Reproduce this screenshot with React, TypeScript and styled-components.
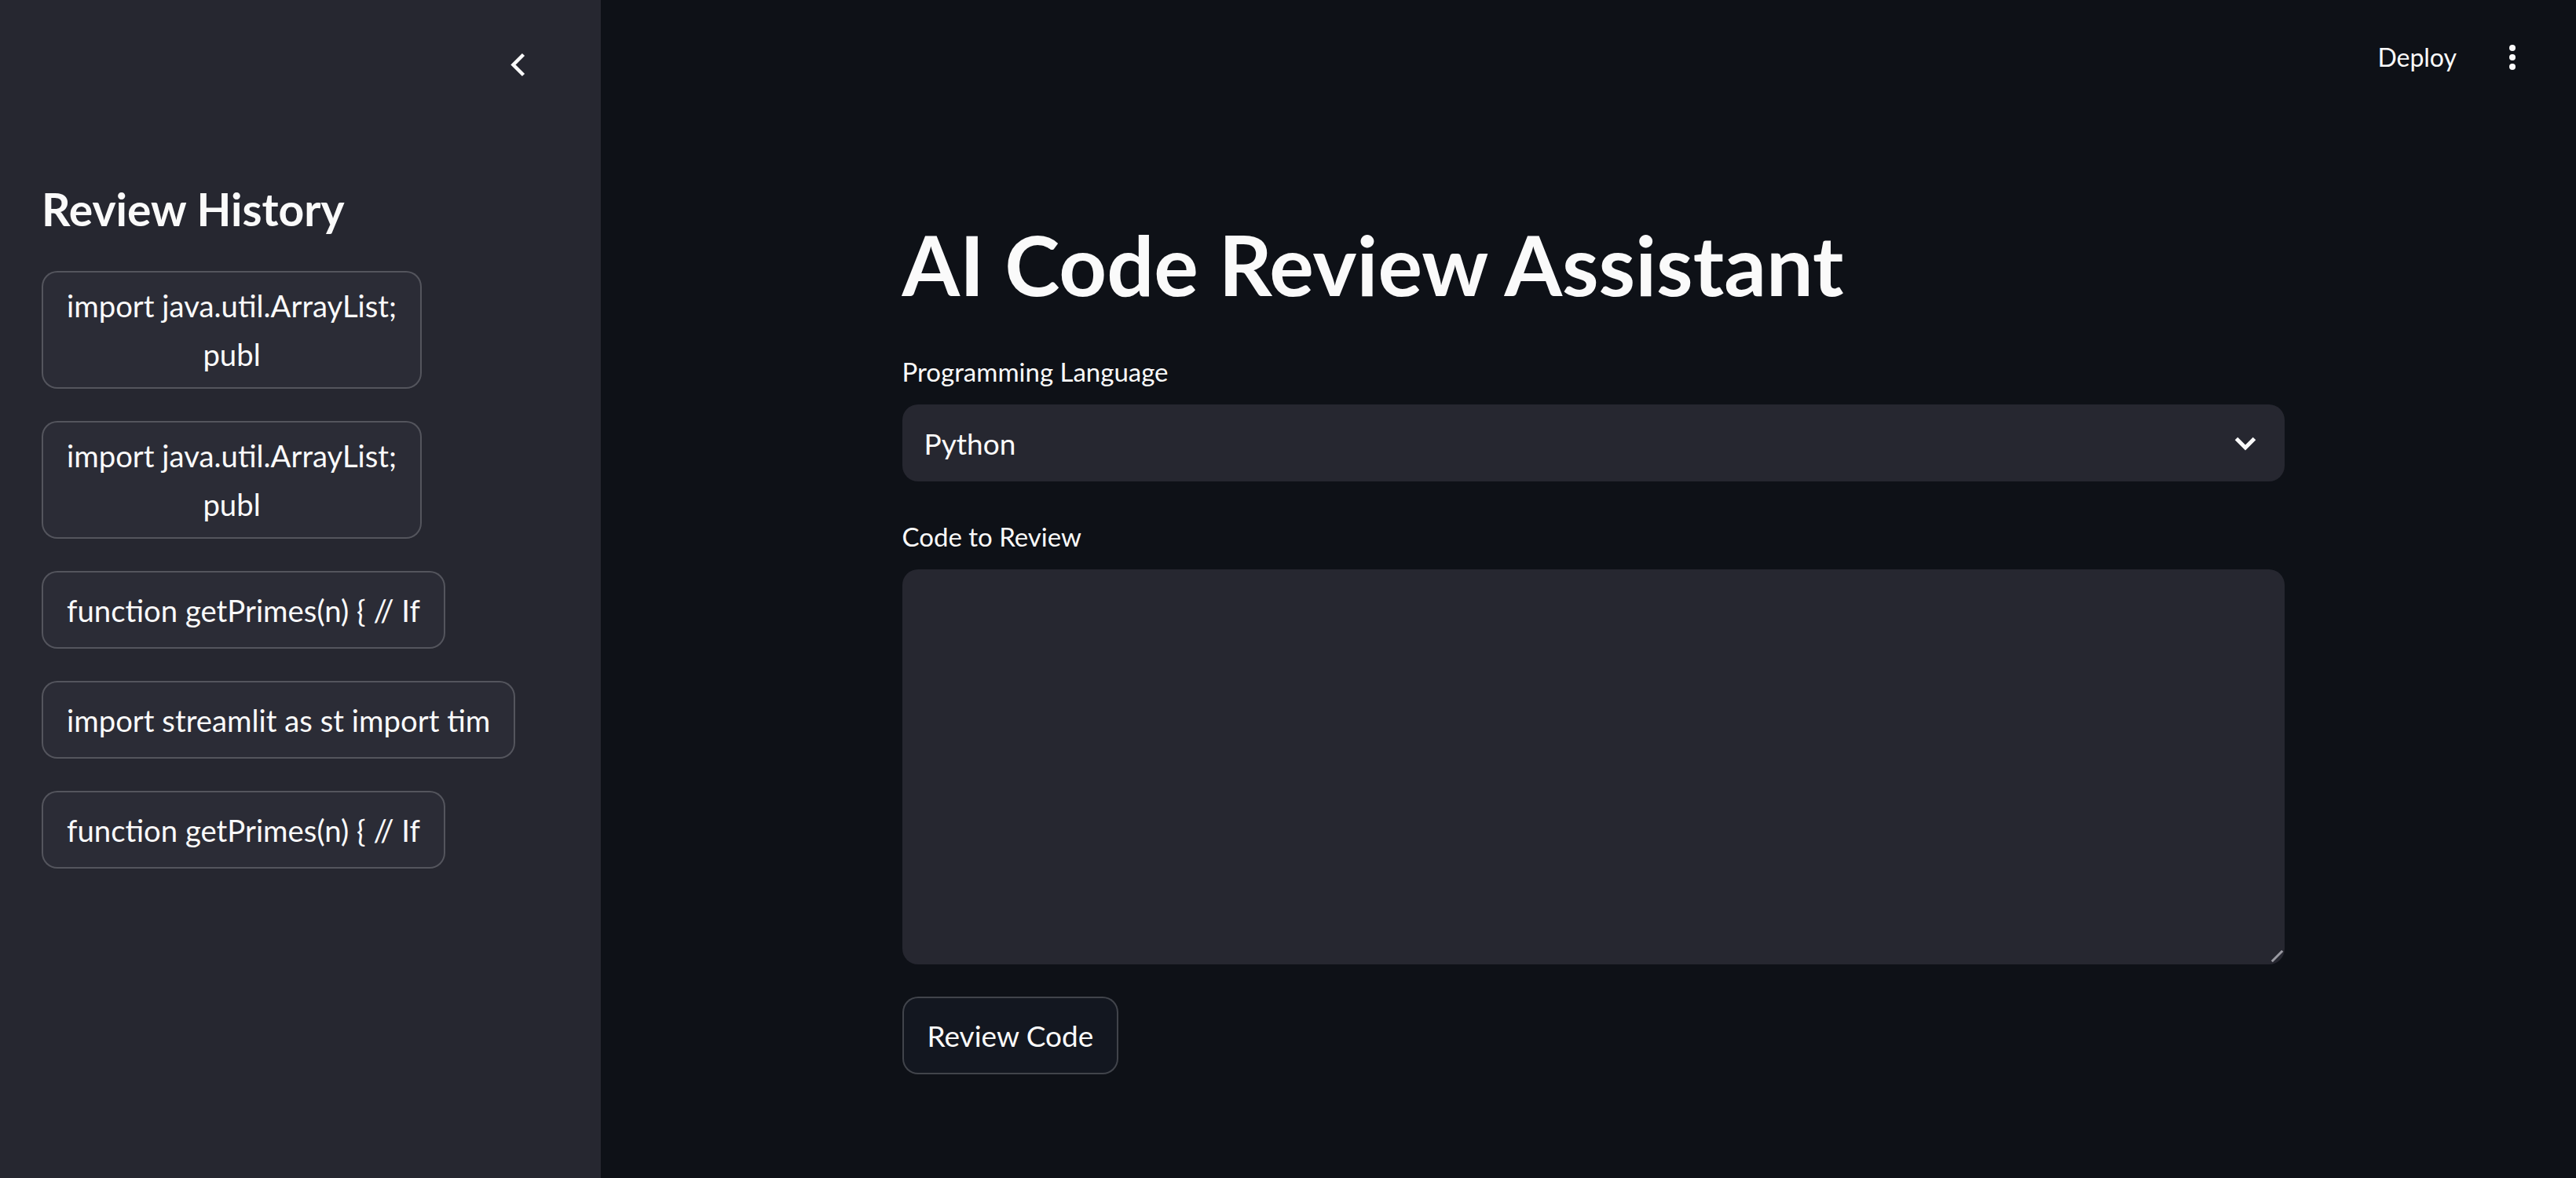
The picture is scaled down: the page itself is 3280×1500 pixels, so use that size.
import styled, { createGlobalStyle } from "styled-components";

const GlobalStyle = createGlobalStyle`
  * {
    box-sizing: border-box;
  }
  body {
    margin: 0;
    background: #0e1117;
    color: #fafafa;
    font-family: Lato, "Noto Sans", sans-serif;
  }
`;

const Page = styled.div`
  display: flex;
  min-height: 100vh;
`;

const Sidebar = styled.aside`
  width: 765px;
  flex-shrink: 0;
  background: #262730;
  padding: 0 53px;
  display: flex;
  flex-direction: column;
`;

const SidebarTop = styled.div`
  height: 233px;
  padding-top: 53px;
  padding-right: 23px;
  display: flex;
  justify-content: flex-end;
  align-items: flex-start;
`;

const IconButton = styled.button`
  background: none;
  border: none;
  padding: 0;
  color: #fafafa;
  display: flex;
  cursor: pointer;
`;

const SidebarTitle = styled.h2`
  margin: 0 0 45px;
  font-size: 57px;
  font-weight: 700;
  line-height: 1.18;
`;

const HistoryList = styled.div`
  display: flex;
  flex-direction: column;
  align-items: flex-start;
  gap: 41px;
`;

const Button = styled.button<{ $inSidebar?: boolean }>`
  min-height: 99px;
  padding: 11px 30px;
  border: 2px solid rgba(250, 250, 250, 0.2);
  border-radius: 20px;
  background: ${(p) => (p.$inSidebar ? "#2b2c36" : "#131720")};
  color: #fafafa;
  font-family: Lato, "Noto Sans", sans-serif;
  font-size: ${(p) => (p.$inSidebar ? "38.3px" : "37px")};
  line-height: 62px;
  text-align: center;
  display: flex;
  align-items: center;
  justify-content: center;
  cursor: pointer;
`;

const Main = styled.main`
  flex: 1;
  display: flex;
  flex-direction: column;
`;

const Header = styled.header`
  height: 145px;
  display: flex;
  justify-content: flex-end;
  align-items: center;
  gap: 47px;
  padding-right: 57px;
`;

const DeployLink = styled.span`
  font-size: 32px;
  color: #fafafa;
`;

const Block = styled.div`
  width: 1760px;
  margin: 0 auto;
  padding-top: 128px;
  position: relative;
  left: 6px;
`;

const Title = styled.h1`
  margin: 0 0 49px;
  font-size: 106px;
  font-weight: 700;
  line-height: 1.19;
`;

const Label = styled.div`
  font-size: 33px;
  line-height: 51px;
  margin-bottom: 16px;
`;

const Select = styled.div`
  height: 98px;
  border-radius: 20px;
  background: #262730;
  padding: 0 25px 0 28px;
  display: flex;
  align-items: center;
  justify-content: space-between;
  font-size: 37px;
  margin-bottom: 45px;
`;

const TextAreaWrap = styled.div`
  position: relative;
  height: 503px;
  margin-bottom: 41px;

  &::after {
    content: "";
    position: absolute;
    right: 0px;
    bottom: 9px;
    width: 19px;
    height: 3px;
    background: #9a9aa2;
    transform: rotate(-45deg);
  }
`;

const TextArea = styled.textarea`
  width: 100%;
  height: 100%;
  border: none;
  border-radius: 20px;
  background: #262730;
  color: #fafafa;
  font-family: Lato, "Noto Sans", sans-serif;
  font-size: 37px;
  padding: 24px 28px;
  resize: none;
  outline: none;
`;

const history = [
  ["import java.util.ArrayList;", "publ"],
  ["import java.util.ArrayList;", "publ"],
  ["function getPrimes(n) { // If"],
  ["import streamlit as st import tim"],
  ["function getPrimes(n) { // If"],
];

function App() {
  return (
    <>
      <GlobalStyle />
      <Page>
        <Sidebar>
          <SidebarTop>
            <IconButton aria-label="Collapse sidebar">
              <svg width="60" height="60" viewBox="0 0 60 60" fill="none">
                <polyline
                  points="37.5,16.5 24.5,29.5 37.5,42.5"
                  stroke="#fafafa"
                  strokeWidth="4.5"
                />
              </svg>
            </IconButton>
          </SidebarTop>
          <SidebarTitle>Review History</SidebarTitle>
          <HistoryList>
            {history.map((lines, i) => (
              <Button key={i} $inSidebar>
                <span>
                  {lines.map((l, j) => (
                    <span key={j}>
                      {j > 0 && <br />}
                      {l}
                    </span>
                  ))}
                </span>
              </Button>
            ))}
          </HistoryList>
        </Sidebar>
        <Main>
          <Header>
            <DeployLink>Deploy</DeployLink>
            <svg width="48" height="48" viewBox="0 0 48 48" fill="#fafafa">
              <circle cx="24" cy="12" r="4" />
              <circle cx="24" cy="24" r="4" />
              <circle cx="24" cy="36" r="4" />
            </svg>
          </Header>
          <Block>
            <Title>AI Code Review Assistant</Title>
            <Label>Programming Language</Label>
            <Select>
              <span>Python</span>
              <svg width="50" height="50" viewBox="0 0 50 50" fill="none">
                <polyline
                  points="13.5,19.5 25,31 36.5,19.5"
                  stroke="#fafafa"
                  strokeWidth="5"
                />
              </svg>
            </Select>
            <Label>Code to Review</Label>
            <TextAreaWrap>
              <TextArea />
            </TextAreaWrap>
            <Button>Review Code</Button>
          </Block>
        </Main>
      </Page>
    </>
  );
}

export default App;
